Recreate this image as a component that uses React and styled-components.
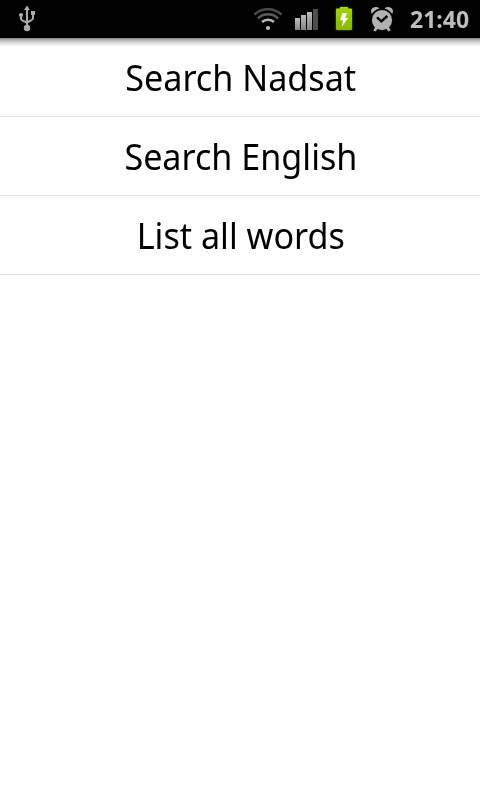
import React from 'react';
import styled, { createGlobalStyle } from 'styled-components';

const GlobalStyle = createGlobalStyle`
  body {
    margin: 0;
    background: #fff;
    font-family: 'Noto Sans', 'Open Sans', sans-serif;
  }
`;

const Screen = styled.div`
  width: 480px;
  height: 800px;
  overflow: hidden;
  background: #fff;
`;

const StatusBar = styled.header`
  display: flex;
  align-items: center;
  justify-content: space-between;
  box-sizing: border-box;
  height: 38px;
  padding: 0 10px 0 14px;
  background: #000;
`;

const StatusIcons = styled.div`
  display: flex;
  align-items: center;
`;

const Icon = styled.svg`
  display: block;
  width: ${props => props.$width}px;
  height: 38px;
`;

const Clock = styled.time`
  width: 60px;
  margin-left: 9px;
  color: #bebebe;
  font-size: 24px;
  font-weight: 700;
  line-height: 38px;
  white-space: nowrap;
  transform: scaleX(0.96);
  transform-origin: left;
`;

const Menu = styled.ul`
  margin: 0;
  padding: 0;
  list-style: none;
  background: linear-gradient(#858080, #b4b4b4 2px, #dedede 5px, #fff 9px);
`;

const MenuItem = styled.li`
  display: flex;
  align-items: center;
  justify-content: center;
  box-sizing: border-box;
  height: 79px;
  padding: 2px 0 0 1px;
  border-bottom: 1px solid #e0e0e0;
  color: #000;
  font-size: 36px;
  line-height: 50px;
`;

// slightly condensed lettering
const Label = styled.span`
  white-space: nowrap;
  transform: scaleX(0.948);
`;

const items = ['Search Nadsat', 'Search English', 'List all words'];

const UsbIcon = () => (
  <Icon $width={26} viewBox="14 0 26 38">
    <g fill="none" stroke="#aaa" strokeWidth="2">
      <path d="M27 9v18M21 15v3.500q0 1.500 1.500 2.100l4.500 1.900M33 14v4q0 1.500-1.500 2.100l-4.500 2.400" />
    </g>
    <path d="M27 5.500l3 4.500h-6z" fill="#aaa" />
    <circle cx="21" cy="15" r="2.1" fill="#aaa" />
    <rect x="31" y="11" width="4" height="4" fill="#aaa" />
    <circle cx="27" cy="28" r="3.200" fill="#aaa" />
  </Icon>
);

const WifiIcon = () => (
  <Icon $width={38} viewBox="249 0 38 38">
    <g fill="none" strokeWidth="2.4">
      <path d="M254.4 14.6Q260 9.300 268 9.300t13.600 5.300" stroke="#4b4b4b" />
      <path d="M258 18.300Q262 14.300 268 14.300t10 4" stroke="#5c5c5c" />
      <path d="M262 22Q264.500 19.700 268 19.700t6 2.300" stroke="#b8b8b8" />
    </g>
    <circle cx="268" cy="28" r="2.1" fill="#c0c0c0" />
  </Icon>
);

const SignalIcon = () => (
  <Icon $width={38} viewBox="287 0 38 38">
    <defs>
      <linearGradient id="signal" x1="0" y1="0" x2="0" y2="1">
        <stop offset="0" stopColor="#bdbdbd" />
        <stop offset="1" stopColor="#858585" />
      </linearGradient>
    </defs>
    <rect x="295" y="18" width="5" height="12" fill="url(#signal)" />
    <rect x="301" y="15" width="5" height="15" fill="url(#signal)" />
    <rect x="307" y="12" width="5" height="18" fill="url(#signal)" />
    <rect x="313" y="9" width="5" height="21" fill="#4e4e4e" />
  </Icon>
);

const BatteryIcon = () => (
  <Icon $width={38} viewBox="325 0 38 38">
    <defs>
      <linearGradient id="battery" x1="0" y1="0" x2="0" y2="1">
        <stop offset="0" stopColor="#a5d600" />
        <stop offset="1" stopColor="#86b800" />
      </linearGradient>
      <filter id="glow" x="-30%" y="-30%" width="160%" height="160%">
        <feGaussianBlur stdDeviation="1.3" />
      </filter>
    </defs>
    <path d="M336 9h4V7h8v2h4v21h-16z" fill="#5c8500" filter="url(#glow)" />
    <path
      d="M337 8.500h3V7h8v1.500h3q1 0 1 1V29q0 1-1 1h-14q-1 0-1-1V9.500q0-1 1-1z"
      fill="url(#battery)"
    />
    <path d="M342.500 13h4.500l-1.800 5h3l-6.700 9.300 1.700-7.100H340z" fill="#fff" />
  </Icon>
);

const AlarmIcon = () => (
  <Icon $width={38} viewBox="363 0 38 38">
    <g fill="#b2b2b2">
      <circle cx="382" cy="20.200" r="10.100" />
      <path d="M371.800 13.700C370 11 371.500 7.100 375.800 7q2.500 0 3.700 1.400-4.900 1.300-7.700 5.300zM392.200 13.700C394 11 392.500 7.100 388.200 7q-2.500 0-3.700 1.400 4.900 1.300 7.700 5.300z" />
      <path d="M375.500 26l2.500 2.500-2.500 3-2.100-1.100zM388.500 26l-2.500 2.500 2.500 3 2.100-1.100z" />
    </g>
    <path d="M377 17.400l4.300 4 6-5.400" fill="none" stroke="#000" strokeWidth="2.500" />
  </Icon>
);

const App = () => (
  <Screen>
    <GlobalStyle />
    <StatusBar>
      <UsbIcon />
      <StatusIcons>
        <WifiIcon />
        <SignalIcon />
        <BatteryIcon />
        <AlarmIcon />
        <Clock>21:40</Clock>
      </StatusIcons>
    </StatusBar>
    <Menu>
      {items.map(item => (
        <MenuItem key={item}>
          <Label>{item}</Label>
        </MenuItem>
      ))}
    </Menu>
  </Screen>
);

export default App;
